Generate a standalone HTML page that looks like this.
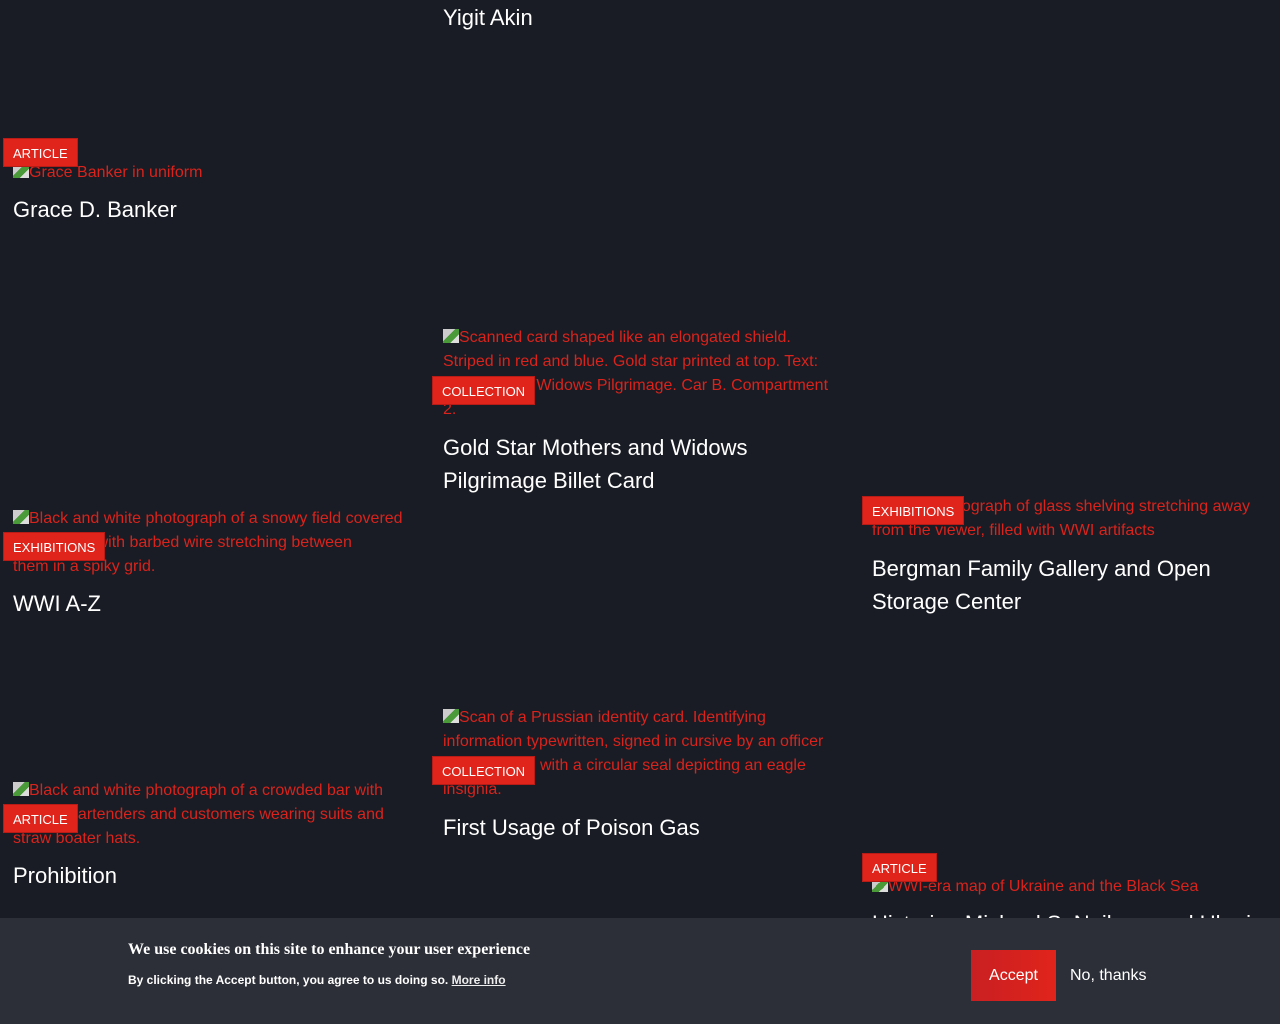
<!DOCTYPE html>
<html><head><meta charset="utf-8"><style>
*{margin:0;padding:0;box-sizing:border-box}
body{width:1280px;height:1024px;background:#191c24;font-family:"Liberation Sans",sans-serif;position:relative;overflow:hidden}
.a{position:absolute;color:#d9231c;font-size:16px;line-height:24px;white-space:nowrap}
.i{display:inline-block;width:16px;height:14px;vertical-align:-1px;background:linear-gradient(135deg,#ccc 0 40%,#4a9a3a 40% 70%,#ddd 70%)}
.t{position:absolute;color:#fff;font-size:22px;line-height:33px;white-space:nowrap}
.b{position:absolute;background:#e0241b;color:#fff;font-size:13px;height:29px;line-height:30px;padding:0 9px 0 9px;border:1px solid #b81c16}
.ban{position:absolute;left:0;top:918px;width:1280px;height:106px;background:#2c2f37}
</style></head><body>
<div class="t" style="left:443px;top:1px">Yigit Akin</div>

<div class="a" style="left:13px;top:161px"><span class="i"></span>Grace Banker in uniform</div>
<div class="b" style="left:3px;top:138px">ARTICLE</div>
<div class="t" style="left:13px;top:193px">Grace D. Banker</div>

<div class="a" style="left:443px;top:326px"><span class="i"></span>Scanned card shaped like an elongated shield.<br>Striped in red and blue. Gold star printed at top. Text:<br>Mothers and Widows Pilgrimage. Car B. Compartment<br>2.</div>
<div class="b" style="left:432px;top:376px">COLLECTION</div>
<div class="t" style="left:443px;top:431px">Gold Star Mothers and Widows<br>Pilgrimage Billet Card</div>

<div class="a" style="left:13px;top:507px"><span class="i"></span>Black and white photograph of a snowy field covered<br>with stakes with barbed wire stretching between<br>them in a spiky grid.</div>
<div class="b" style="left:3px;top:532px">EXHIBITIONS</div>
<div class="t" style="left:13px;top:587px">WWI A-Z</div>

<div class="a" style="left:872px;top:495px"><span class="i"></span>Color photograph of glass shelving stretching away<br>from the viewer, filled with WWI artifacts</div>
<div class="b" style="left:862px;top:496px">EXHIBITIONS</div>
<div class="t" style="left:872px;top:552px">Bergman Family Gallery and Open<br>Storage Center</div>

<div class="a" style="left:443px;top:706px"><span class="i"></span>Scan of a Prussian identity card. Identifying<br>information typewritten, signed in cursive by an officer<br>and stamped with a circular seal depicting an eagle<br>insignia.</div>
<div class="b" style="left:432px;top:756px">COLLECTION</div>
<div class="t" style="left:443px;top:811px">First Usage of Poison Gas</div>

<div class="a" style="left:13px;top:779px"><span class="i"></span>Black and white photograph of a crowded bar with<br>several bartenders and customers wearing suits and<br>straw boater hats.</div>
<div class="b" style="left:3px;top:804px">ARTICLE</div>
<div class="t" style="left:13px;top:859px">Prohibition</div>

<div class="a" style="left:872px;top:875px"><span class="i"></span>WWI-era map of Ukraine and the Black Sea</div>
<div class="b" style="left:862px;top:853px">ARTICLE</div>
<div class="t" style="left:872px;top:907px">Historian Michael S. Neiberg and Ukraine</div>

<div class="ban">
<div style="position:absolute;left:128px;top:23px;color:#fff;font-family:'Liberation Serif',serif;font-weight:bold;font-size:16px;white-space:nowrap">We use cookies on this site to enhance your user experience</div>
<div style="position:absolute;left:128px;top:55px;color:#fff;font-weight:bold;font-size:12px;white-space:nowrap">By clicking the Accept button, you agree to us doing so. <span style="text-decoration:underline;color:#eee">More info</span></div>
<div style="position:absolute;left:971px;top:32px;width:85px;height:51px;background:linear-gradient(90deg,#c91f22,#e0241b);color:#fff;font-size:16px;line-height:51px;text-align:center">Accept</div>
<div style="position:absolute;left:1070px;top:32px;color:#fff;font-size:16px;line-height:51px">No, thanks</div>
</div>
</body></html>
